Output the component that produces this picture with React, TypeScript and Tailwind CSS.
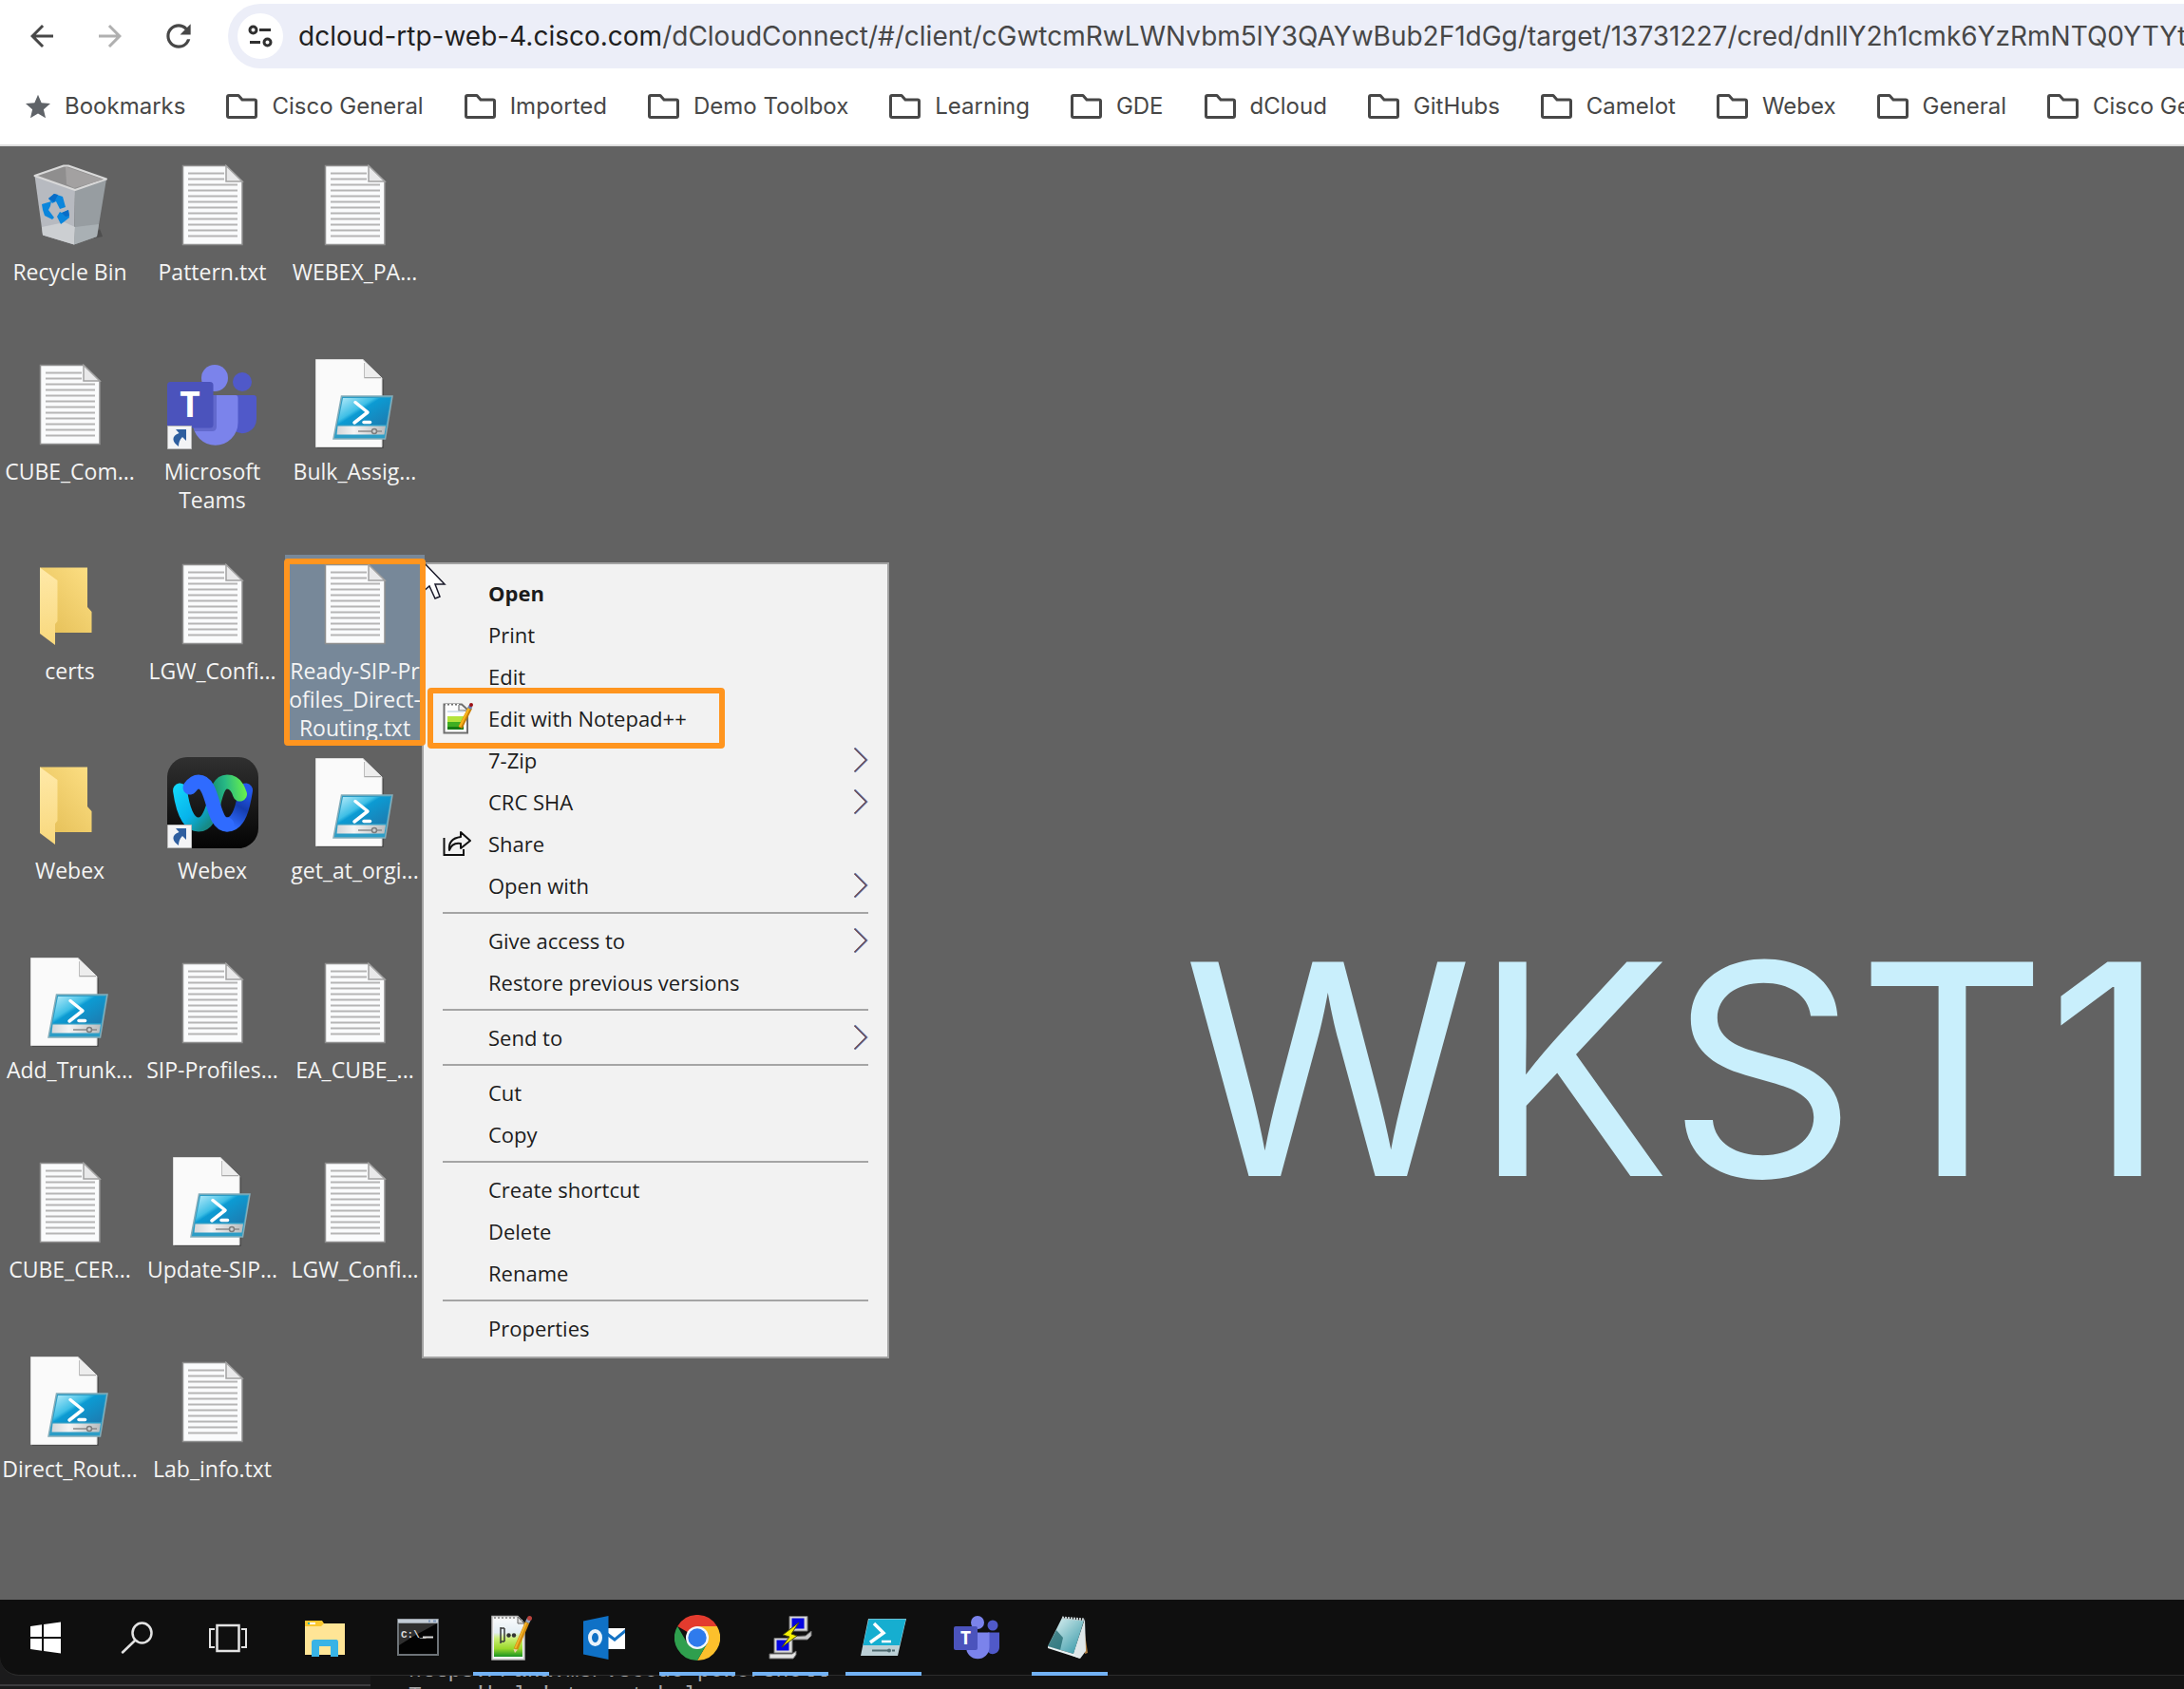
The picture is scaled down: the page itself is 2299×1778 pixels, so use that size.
import React from 'react';
import { MdArrowBack, MdArrowForward, MdRefresh } from 'react-icons/md';

/* ---------- desktop icons (96 x 96) ---------- */

function TextFileIcon() {
  const lines = [15, 21, 27, 33, 39, 45, 51, 57, 63, 69, 75, 81];
  return (
    <svg viewBox="0 0 96 96" className="size-24" aria-hidden="true">
      <path d="M16.500 7.500H62L79 24V90.500H16.500Z" fill="#fafbfc" stroke="#8f8f8f" strokeWidth="1.500" />
      {lines.map((y, i) => (
        <path key={y} d={i < 2 ? `M22 ${y}.500H60` : `M22 ${y}.500H74`} stroke="#b5b5b5" strokeWidth="2.200" />
      ))}
      <path d="M62 7.500V24H79Z" fill="#e9e9ea" stroke="#a3a3a3" strokeWidth="1.500" />
    </svg>
  );
}

function ScriptFileIcon() {
  return (
    <svg viewBox="0 0 96 96" className="size-24" aria-hidden="true">
      <defs>
        <linearGradient id="psFile" x1="0" y1="0" x2="1" y2="0.800">
          <stop offset="0" stopColor="#b9ecfa" />
          <stop offset="0.420" stopColor="#3fbfe6" />
          <stop offset="0.500" stopColor="#0c9bd3" />
          <stop offset="1" stopColor="#1b7fb4" />
        </linearGradient>
        <linearGradient id="psStrip" x1="0" y1="0" x2="1" y2="0">
          <stop offset="0" stopColor="#d4d6d8" />
          <stop offset="0.350" stopColor="#f4f4f4" />
          <stop offset="1" stopColor="#b9bcbe" />
        </linearGradient>
      </defs>
      <path d="M8 3H58L78 23V95H8Z" fill="#3f3f3f" opacity="0.600" />
      <path d="M6.500 1.500H56L76 21V93.500H6.500Z" fill="#fafafa" stroke="#dcdcdc" />
      <path d="M58 5V20.500H75" fill="#f0f0f0" stroke="#a9a9a9" strokeWidth="1.500" />
      <path d="M58 4L75 20H58Z" fill="#ededed" />
      <path d="M33.500 40H87L79.500 85H25Z" fill="#2c9dc6" stroke="#84adba" strokeWidth="1.500" />
      <path d="M35 42H85L80.500 70H29.500Z" fill="url(#psFile)" />
      <path d="M29.500 71.500H80L78.500 80.500H28.500Z" fill="url(#psStrip)" />
      <path d="M51 77H66M70 77H76" stroke="#8b8b8b" strokeWidth="1.500" />
      <circle cx="68" cy="77" r="2.500" fill="none" stroke="#7d7d7d" strokeWidth="1.500" />
      <path d="M48 46.500L61 57L47 68" fill="none" stroke="#fff" strokeWidth="3.500" strokeLinecap="round" strokeLinejoin="round" />
      <path d="M57 67.500H63.500" stroke="#fff" strokeWidth="3.500" strokeLinecap="round" />
    </svg>
  );
}

function RecycleBinIcon() {
  return (
    <svg viewBox="0 0 96 96" className="size-24" aria-hidden="true">
      <path d="M72 84L82 82L79 74Z" fill="#4e4e4e" />
      <path d="M10.500 18L53 33L52 90.500L19 80.500Z" fill="#b7bac0" />
      <path d="M86 21.500L53 33L52 90.500L76 82Z" fill="#979da1" />
      <path d="M18 72L42 67L53 72L52 90.500L19 80.500Z" fill="#cccfd2" />
      <path d="M53 72L78 69L76 82L52 90.500Z" fill="#a9b0b4" />
      <path d="M10.500 18L41 7.500H46L86 21.500L53 33Z" fill="#8f8e8e" stroke="#d9d9d9" strokeWidth="2" strokeLinejoin="round" />
      <path d="M43 8.500L44 27L52 31L83 22Z" fill="#a3a1a1" />
      <g fill="#0b86dc">
        <path d="M25 42L31 37L40 40L43 51L37 53L33 45L29 47Z" />
        <path d="M18 48L28 45L27 50L25 54L31 62L29 64L21 60L19 54Z" />
        <path d="M34 61L37 56L39 57L46 54L47 62L42 66L38 69Z" />
      </g>
      <path d="M25 42L31 37L35 38L31 46Z" fill="#0a6cc6" />
      <path d="M39 57L46 54L47 60L43 61Z" fill="#0a6cc6" />
    </svg>
  );
}

function FolderIcon() {
  return (
    <svg viewBox="0 0 96 96" className="size-24" aria-hidden="true">
      <defs>
        <linearGradient id="folderBack" x1="0" y1="1" x2="1" y2="0">
          <stop offset="0" stopColor="#e3bd54" />
          <stop offset="1" stopColor="#fddf84" />
        </linearGradient>
        <linearGradient id="folderFront" x1="0" y1="0" x2="0" y2="1">
          <stop offset="0" stopColor="#ffe9a8" />
          <stop offset="1" stopColor="#f8d87d" />
        </linearGradient>
      </defs>
      <path d="M16 10.500H66V52L70.500 57V79H32L16 70Z" fill="url(#folderBack)" />
      <path d="M16 10.500L34.500 24V67L32 70V92L16 80Z" fill="url(#folderFront)" />
    </svg>
  );
}

function ShortcutBadge() {
  return (
    <g>
      <path d="M0.500 71.500H25.500V95.500H0.500Z" fill="#f3f4f6" stroke="#b9b9b9" />
      <path d="M9 75H20V87L16 83C13 86 12 89 12 93C5 88 4 82 12.500 79Z" fill="#2f5f9f" />
    </g>
  );
}

function TeamsIcon() {
  return (
    <svg viewBox="0 0 96 96" className="size-24" aria-hidden="true">
      <circle cx="79" cy="25" r="10" fill="#5059c9" />
      <path d="M70 39H91Q94 39 94 42V64A15 15 0 0 1 70 76Z" fill="#5059c9" />
      <circle cx="50" cy="21" r="14" fill="#7b83eb" />
      <path d="M27 39H72Q74.500 39 74.500 42V68A23.500 23.500 0 0 1 27 68Z" fill="#7b83eb" />
      <path d="M30 39H52V72Q52 77 47 77H28.500L27 68Z" fill="#4a50b0" opacity="0.500" />
      <rect x="0" y="25" width="48.500" height="48.500" rx="3.500" fill="#4b53bc" />
      <text x="24" y="62" textAnchor="middle" fontFamily="Open Sans, sans-serif" fontWeight="700" fontSize="37" fill="#fff">T</text>
      <ShortcutBadge />
    </svg>
  );
}

function WebexIcon() {
  return (
    <svg viewBox="0 0 96 96" className="size-24" aria-hidden="true">
      <defs>
        <linearGradient id="wxBg" x1="0" y1="0" x2="0" y2="1">
          <stop offset="0" stopColor="#303030" />
          <stop offset="0.500" stopColor="#1a1a1a" />
          <stop offset="1" stopColor="#040404" />
        </linearGradient>
        <linearGradient id="wxCyan" gradientUnits="userSpaceOnUse" x1="10" y1="30" x2="48" y2="66">
          <stop offset="0" stopColor="#12d6fb" />
          <stop offset="0.600" stopColor="#07b3ea" />
          <stop offset="1" stopColor="#178a86" />
        </linearGradient>
        <linearGradient id="wxGreen" gradientUnits="userSpaceOnUse" x1="46" y1="40" x2="82" y2="36">
          <stop offset="0" stopColor="#148a72" />
          <stop offset="0.450" stopColor="#27b884" />
          <stop offset="1" stopColor="#65ee4f" />
        </linearGradient>
        <linearGradient id="wxBlue" gradientUnits="userSpaceOnUse" x1="64" y1="70" x2="84" y2="36">
          <stop offset="0" stopColor="#2f6bff" />
          <stop offset="0.550" stopColor="#143cae" />
          <stop offset="1" stopColor="#2358ea" />
        </linearGradient>
      </defs>
      <rect width="96" height="96" rx="21" fill="url(#wxBg)" />
      <g fill="none" strokeLinecap="round" strokeWidth="15">
        <path d="M63 71C76 71 80 51 82.500 35" stroke="url(#wxBlue)" />
        <path d="M13.500 35C16 53 21 71 33 71C42 71 46 60 49 50" stroke="url(#wxCyan)" />
        <path d="M49 48C52 36 55 26 63 26C70 26 74 31 76.500 39" stroke="url(#wxGreen)" />
        <path d="M24 32C27 28 29 26 33 26C50 26 46 71 63 71" stroke="#2f6bff" />
      </g>
      <ShortcutBadge />
    </svg>
  );
}

/* ---------- menu icons ---------- */

function NotepadPlusSmall() {
  return (
    <svg viewBox="0 0 32 34" className="h-[34px] w-8" aria-hidden="true">
      <path d="M1.500 2.500H20L26 8V32.500H1.500Z" fill="#fdfdfd" stroke="#6f6f6f" strokeWidth="2" />
      <path d="M3 3.500H18" stroke="#fff" strokeWidth="3" strokeDasharray="2 2" />
      <path d="M17 3V9H25" fill="#eee" stroke="#909090" strokeWidth="1.500" />
      <path d="M5 10H22" stroke="#c5d7e6" strokeWidth="1.500" />
      <path d="M5 15H22V29H5Z" fill="#b4e33c" />
      <path d="M5 21H22V29H5Z" fill="#3fae22" />
      <path d="M5 26H22V29H5Z" fill="#147a12" />
      <path d="M18.500 27L29 6" stroke="#c77d08" strokeWidth="4.500" />
      <path d="M18 26L28 6" stroke="#f7b41c" strokeWidth="2.500" />
      <path d="M28 7L29.500 4" stroke="#6d7fae" strokeWidth="4" />
      <circle cx="30" cy="3" r="2" fill="#9c0e12" />
    </svg>
  );
}

function ShareIcon() {
  return (
    <svg viewBox="0 0 32 28" className="h-7 w-8" fill="none" stroke="#101010" strokeWidth="2" aria-hidden="true">
      <path d="M1.500 8V26H22V20" />
      <path d="M19 2L29 11L19 19V14C13 13 9 15 7 21C6 12 11 8 19 7Z" strokeLinejoin="round" />
    </svg>
  );
}

function Chevron() {
  return (
    <svg viewBox="0 0 16 28" className="h-7 w-4" fill="none" aria-hidden="true">
      <path d="M2 1.500L14.500 14L2 26.500" stroke="#7fb2ea" strokeWidth="2" />
      <path d="M1 2L13 14L1 26" stroke="#d9a066" strokeWidth="1" />
      <path d="M1.500 1.500L14 14L1.500 26.500" stroke="#5f4a68" strokeWidth="1.500" />
    </svg>
  );
}

/* ---------- taskbar icons ---------- */

const S = ({ children }: { children: React.ReactNode }) => (
  <svg viewBox="0 0 48 48" className="size-12" aria-hidden="true">{children}</svg>
);

const WindowsLogo = () => (
  <S>
    <path d="M8 12L20 10.300V23H8ZM22 10L40 7.500V23H22ZM8 25H20V37.700L8 36ZM22 25H40V40.500L22 38Z" fill="#fff" />
  </S>
);

const SearchGlyph = () => (
  <S>
    <g fill="none" stroke="#e3e3e3" strokeWidth="2.500" strokeLinecap="round">
      <ellipse cx="29.500" cy="19" rx="10" ry="10.500" />
      <path d="M22 27L9 39.500" />
    </g>
  </S>
);

const TaskViewGlyph = () => (
  <S>
    <g fill="none" stroke="#e3e3e3" strokeWidth="2.500">
      <rect x="12.500" y="11" width="23" height="27" />
      <path d="M10 15H5V34H10M38 15H43V34H38" strokeWidth="2" />
    </g>
  </S>
);

const ExplorerGlyph = () => (
  <S>
    <path d="M3 6H21L23 9H41Q45 9 45 12V40Q45 42 43 42H5Q3 42 3 40Z" fill="#fbc72e" />
    <path d="M6 9H14" stroke="#fff" strokeWidth="2" />
    <path d="M6 9H8" stroke="#35b5a0" strokeWidth="2" />
    <path d="M3 12H20L23 9H45V42H3Z" fill="#ffe596" />
    <path d="M10 44V29Q10 26 13 26H36Q38 26 38 29V44H30V33H18V44Z" fill="#38b3e6" />
  </S>
);

const TerminalGlyph = () => (
  <S>
    <rect x="2" y="4" width="44" height="39" fill="#6d7378" />
    <rect x="3" y="4.500" width="42" height="4" fill="#c3ccd6" />
    <path d="M35 6.500H37M40 6.500H43" stroke="#7a94b8" strokeWidth="2" />
    <rect x="4" y="9" width="40" height="32" fill="#030303" />
    <path d="M4 9H44L20 22L4 32Z" fill="#3b3b3b" opacity="0.800" />
    <text x="6" y="24" fontFamily="Liberation Mono, monospace" fontWeight="700" fontSize="11" fill="#dcdcdc">C:\_</text>
    <path d="M29 23.500H40" stroke="#d9d9d9" strokeWidth="2" />
  </S>
);

const NotepadPlusGlyph = () => (
  <S>
    <defs>
      <linearGradient id="nppPage" x1="0" y1="0" x2="0" y2="1">
        <stop offset="0" stopColor="#f6f9fb" />
        <stop offset="0.350" stopColor="#e4eef4" />
        <stop offset="0.500" stopColor="#cdf07a" />
        <stop offset="0.780" stopColor="#9bd92c" />
        <stop offset="1" stopColor="#189321" />
      </linearGradient>
    </defs>
    <path d="M4 1.500H31L38 9V47H4Z" fill="#f5f5f5" stroke="#b9b9b9" strokeWidth="1.500" />
    <path d="M6 5H36V44H6Z" fill="url(#nppPage)" />
    <path d="M6 3H28" stroke="#9a9a9a" strokeWidth="2" strokeDasharray="2 2" />
    <path d="M31 2V9H38Z" fill="#ddd" stroke="#666" />
    <path d="M13 13V30M17 14V28M13 14H17M13 28H17" stroke="#3a3a3a" strokeWidth="1.500" />
    <circle cx="21.500" cy="21.500" r="2.200" fill="#333" />
    <circle cx="27" cy="21.500" r="2.200" fill="#333" />
    <path d="M29 36L41 8" stroke="#d48d0e" strokeWidth="4.500" />
    <path d="M28.500 35L40 8" stroke="#f3b52f" strokeWidth="1.800" />
    <path d="M41 8L43 4" stroke="#9aa5bb" strokeWidth="4.500" />
    <circle cx="43.500" cy="3.500" r="2.500" fill="#b9423d" />
    <path d="M26.500 36L28 40L31 36.500Z" fill="#e9cfa3" />
  </S>
);

const OutlookGlyph = () => (
  <S>
    <rect x="26" y="14" width="20" height="22" fill="#fff" />
    <path d="M46 15V19L35 28L27 22V18L35 24Z" fill="#1573c4" />
    <path d="M2 6.500L28.500 1V47L2 41.500Z" fill="#0f71c6" />
    <ellipse cx="14.500" cy="24" rx="5.500" ry="7" fill="none" stroke="#e9f3fb" strokeWidth="4" />
  </S>
);

const ChromeGlyph = () => (
  <S>
    <path d="M24 24L3.200 12A24 24 0 0 1 44.800 12Z" fill="#e33b2e" />
    <path d="M24 12H44.800A24 24 0 0 1 24 48L34.400 30Z" fill="#fcc02c" />
    <path d="M13.600 30L3.200 12A24 24 0 0 0 24 48L34.400 30Z" fill="#2f9f4e" />
    <circle cx="24" cy="24" r="12" fill="#f3f7fd" />
    <circle cx="24" cy="24" r="9.700" fill="#2f7bed" />
  </S>
);

const PuttyGlyph = () => (
  <S>
    <g>
      <path d="M23 1.500H42V17H23Z" fill="#d9d9d9" stroke="#777" />
      <rect x="25.500" y="3.500" width="13" height="11" fill="#0505e0" />
      <path d="M22 23L40 22L46 17V22L42 26H22Z" fill="#c9c9c9" stroke="#6e6e6e" />
      <path d="M7 24.500H26V40H7Z" fill="#d9d9d9" stroke="#777" />
      <rect x="9.500" y="26.500" width="13" height="11" fill="#0505e0" />
      <path d="M2 41H26L30 38V42L27 46H2Z" fill="#e4e4e4" stroke="#6e6e6e" />
    </g>
    <path d="M33 8L16 21L23 23L15 34L31 22L25 20Z" fill="#f6f203" stroke="#4b4a0a" strokeWidth="1" />
  </S>
);

const PowerShellGlyph = () => (
  <S>
    <path d="M8 4H48L39 43H0Z" fill="#bcd0d6" />
    <path d="M8.500 4.500H47.500L41 32H2.500Z" fill="#16aed0" />
    <path d="M14 9L24 19L10 29" fill="none" stroke="#fff" strokeWidth="3.500" />
    <path d="M22 28H32" stroke="#fff" strokeWidth="2.500" />
    <path d="M12 37.500H30M33 37.500H36" stroke="#4e6a70" strokeWidth="2" />
    <circle cx="30" cy="37.500" r="2" fill="#4e6a70" />
  </S>
);

const TeamsGlyph = () => (
  <S>
    <circle cx="41" cy="11" r="5.500" fill="#5059c9" />
    <path d="M36 18.500H48V34A7 7 0 0 1 36 39Z" fill="#5059c9" />
    <circle cx="25" cy="8" r="7" fill="#7b83eb" />
    <path d="M13 18.500H37.500V34A12 12 0 0 1 13 34Z" fill="#7b83eb" />
    <rect x="0" y="12" width="25" height="25" rx="2" fill="#4b53bc" />
    <text x="12.500" y="31" textAnchor="middle" fontFamily="Open Sans, sans-serif" fontWeight="700" fontSize="19" fill="#fff">T</text>
  </S>
);

const NotepadGlyph = () => (
  <S>
    <defs>
      <linearGradient id="npPad" x1="0" y1="0" x2="1" y2="1">
        <stop offset="0" stopColor="#eefafa" />
        <stop offset="0.500" stopColor="#8cc6cd" />
        <stop offset="1" stopColor="#2d93a5" />
      </linearGradient>
    </defs>
    <path d="M38 6L43 40L40 41Z" fill="#a9793c" />
    <path d="M40 4L41 38L35 46L27 43Z" fill="#dfe7e9" />
    <path d="M16 3L39 6L28 41L1 33Z" fill="url(#npPad)" />
    <path d="M1 33L10 16L17 24L14 37Z" fill="#175f66" opacity="0.700" />
    <path d="M16 3L40 5" stroke="#c3cdd0" strokeWidth="3" strokeDasharray="2 1" />
    <path d="M1 33L28 41L35 46L29 44L1 35Z" fill="#eaf2f3" />
  </S>
);

/* ---------- data ---------- */

const bookmarks = [
  'Cisco General', 'Imported', 'Demo Toolbox', 'Learning', 'GDE', 'dCloud',
  'GitHubs', 'Camelot', 'Webex', 'General', 'Cisco General',
];

type Kind = 'bin' | 'txt' | 'ps' | 'folder' | 'teams' | 'webex';

const icons: Record<Kind, () => React.ReactElement> = {
  bin: RecycleBinIcon, txt: TextFileIcon, ps: ScriptFileIcon,
  folder: FolderIcon, teams: TeamsIcon, webex: WebexIcon,
};

const shortcuts: { kind: Kind; lines: string[]; selected?: boolean }[] = [
  { kind: 'bin', lines: ['Recycle Bin'] },
  { kind: 'txt', lines: ['CUBE_Com...'] },
  { kind: 'folder', lines: ['certs'] },
  { kind: 'folder', lines: ['Webex'] },
  { kind: 'ps', lines: ['Add_Trunk...'] },
  { kind: 'txt', lines: ['CUBE_CER...'] },
  { kind: 'ps', lines: ['Direct_Rout...'] },
  { kind: 'txt', lines: ['Pattern.txt'] },
  { kind: 'teams', lines: ['Microsoft', 'Teams'] },
  { kind: 'txt', lines: ['LGW_Confi...'] },
  { kind: 'webex', lines: ['Webex'] },
  { kind: 'txt', lines: ['SIP-Profiles...'] },
  { kind: 'ps', lines: ['Update-SIP...'] },
  { kind: 'txt', lines: ['Lab_info.txt'] },
  { kind: 'txt', lines: ['WEBEX_PA...'] },
  { kind: 'ps', lines: ['Bulk_Assig...'] },
  { kind: 'txt', lines: ['Ready-SIP-Pr', 'ofiles_Direct-', 'Routing.txt'], selected: true },
  { kind: 'ps', lines: ['get_at_orgi...'] },
  { kind: 'txt', lines: ['EA_CUBE_...'] },
  { kind: 'txt', lines: ['LGW_Confi...'] },
];

type Item = { label: string; icon?: React.ReactNode; sub?: boolean; bold?: boolean; marked?: boolean };

const menu: Item[][] = [
  [
    { label: 'Open', bold: true },
    { label: 'Print' },
    { label: 'Edit' },
    { label: 'Edit with Notepad++', icon: <NotepadPlusSmall />, marked: true },
    { label: '7-Zip', sub: true },
    { label: 'CRC SHA', sub: true },
    { label: 'Share', icon: <ShareIcon /> },
    { label: 'Open with', sub: true },
  ],
  [{ label: 'Give access to', sub: true }, { label: 'Restore previous versions' }],
  [{ label: 'Send to', sub: true }],
  [{ label: 'Cut' }, { label: 'Copy' }],
  [{ label: 'Create shortcut' }, { label: 'Delete' }, { label: 'Rename' }],
  [{ label: 'Properties' }],
];

const apps = [
  { name: 'File Explorer', Glyph: ExplorerGlyph, open: false },
  { name: 'Command Prompt', Glyph: TerminalGlyph, open: false },
  { name: 'Notepad++', Glyph: NotepadPlusGlyph, open: true },
  { name: 'Outlook', Glyph: OutlookGlyph, open: false },
  { name: 'Chrome', Glyph: ChromeGlyph, open: true },
  { name: 'PuTTY', Glyph: PuttyGlyph, open: true },
  { name: 'PowerShell', Glyph: PowerShellGlyph, open: true },
  { name: 'Teams', Glyph: TeamsGlyph, open: false },
  { name: 'Notepad', Glyph: NotepadGlyph, open: true },
];

/* ---------- sections ---------- */

function BrowserBar() {
  return (
    <header className="shrink-0 border-b-2 border-[#dedede] bg-white pb-1 font-['Inter',sans-serif]">
      <div className="flex items-center gap-6 pt-1 pb-1 pl-5">
        <button aria-label="Back" className="grid size-12 shrink-0 place-items-center text-[#474747]"><MdArrowBack size={36} /></button>
        <button aria-label="Forward" className="grid size-12 shrink-0 place-items-center text-[#b0b0b0]"><MdArrowForward size={36} /></button>
        <button aria-label="Reload" className="grid size-12 shrink-0 place-items-center text-[#474747]"><MdRefresh size={38} /></button>
        <div className="ml-1 flex h-[68px] min-w-0 flex-1 items-center rounded-l-full bg-[#eceef8] pl-2.5 text-[28px] leading-9">
          <button aria-label="Site information" className="mr-4 grid size-12 shrink-0 place-items-center rounded-full bg-white">
            <svg viewBox="0 0 26 26" className="size-[26px]" fill="none" stroke="#303030" strokeWidth="3" aria-hidden="true">
              <circle cx="5.500" cy="6.500" r="3.500" />
              <path d="M12 6.500H24M2 19.500H13" />
              <circle cx="20.500" cy="19.500" r="3.500" />
            </svg>
          </button>
          <label htmlFor="path" className="text-[#1f1f1f]">dcloud-rtp-web-4.cisco.com</label>
          <input
            id="path"
            type="text"
            defaultValue="/dCloudConnect/#/client/cGwtcmRwLWNvbm5lY3QAYwBub2F1dGg/target/13731227/cred/dnllY2h1cmk6YzRmNTQ0YTYtM2"
            className="min-w-0 flex-1 bg-transparent text-[#474747] outline-none"
          />
        </div>
      </div>
      <nav className="flex h-[72px] items-center gap-[43px] overflow-hidden pl-[27px] text-2xl leading-8 whitespace-nowrap text-[#474747]">
        <a href="#bookmarks" className="flex shrink-0 items-center gap-[15px]">
          <svg viewBox="2 2 20 19" className="h-[26px] w-[26px]" fill="#5f6368" aria-hidden="true">
            <path d="M12 17.270L18.180 21l-1.640-7.030L22 9.240l-7.190-.610L12 2 9.190 8.630 2 9.240l5.460 4.730L5.820 21z" />
          </svg>
          Bookmarks
        </a>
        {bookmarks.map((b, i) => (
          <a key={i} href="#folder" className="flex shrink-0 items-center gap-[15px]">
            <svg viewBox="0 0 33 26" className="h-[26px] w-[33px]" fill="none" stroke="#474747" strokeWidth="3" strokeLinejoin="round" aria-hidden="true">
              <path d="M1.500 3Q1.500 1.500 3 1.500H13L17 6H30Q31.500 6 31.500 7.500V23Q31.500 24.500 30 24.500H3Q1.500 24.500 1.500 23Z" />
            </svg>
            {b}
          </a>
        ))}
      </nav>
    </header>
  );
}

function DesktopIcons() {
  return (
    <div className="grid w-[450px] auto-cols-[150px] grid-flow-col grid-rows-[repeat(7,210px)] pt-2.5">
      {shortcuts.map((s, i) => {
        const Icon = icons[s.kind];
        return (
          <div key={i} className="w-[147px]">
            <button
              className={
                s.selected
                  ? 'relative flex w-full flex-col items-center bg-[#778899] pt-[3px]'
                  : 'flex w-full flex-col items-center pt-[3px]'
              }
            >
              <Icon />
              <span className="mt-2 block text-[23px] leading-[30px] whitespace-nowrap text-[#f4f4f4]">
                {s.lines.map((l) => (
                  <span key={l} className="block">{l}</span>
                ))}
              </span>
              {s.selected && <span className="absolute -inset-x-px top-1 -bottom-1 z-20 rounded border-6 border-[#ff951f]" />}
            </button>
          </div>
        );
      })}
    </div>
  );
}

function ContextMenu() {
  return (
    <div role="menu" className="absolute top-[438px] left-[444px] w-[492px] border-2 border-[#a3a3a3] bg-[#f2f2f2] py-2 text-[22px] leading-[30px] text-[#1c1c1c]">
      {menu.map((group, g) => (
        <div key={g}>
          {g > 0 && (
            <div className="flex h-3.5 items-center px-5">
              <hr className="w-full border-t-2 border-[#a5a5a5]" />
            </div>
          )}
          {group.map((it) => (
            <button key={it.label} role="menuitem" className="relative flex h-11 w-full items-center gap-4 px-5 text-left">
              <span className="w-8 shrink-0">{it.icon}</span>
              <span className={it.bold ? 'flex-1 font-bold' : 'flex-1'}>{it.label}</span>
              {it.sub && <Chevron />}
              {it.marked && <span className="absolute -inset-y-2.5 left-1 w-[313px] rounded border-6 border-[#ff951f]" />}
            </button>
          ))}
        </div>
      ))}
    </div>
  );
}

function Taskbar() {
  return (
    <footer className="flex h-20 shrink-0 rounded-bl-[20px] border-b border-[#2c2c2c] bg-[#0f0f0f]">
      <button aria-label="Start" className="grid w-24 place-items-center"><WindowsLogo /></button>
      <button aria-label="Search" className="grid w-24 place-items-center"><SearchGlyph /></button>
      <button aria-label="Task View" className="grid w-24 place-items-center"><TaskViewGlyph /></button>
      <div className="ml-[5px] flex">
        {apps.map(({ name, Glyph, open }) => (
          <button key={name} aria-label={name} className="relative grid w-[98px] place-items-center">
            <Glyph />
            {open && <span className="absolute inset-x-[9px] -bottom-px h-1 bg-[#72b2f5]" />}
          </button>
        ))}
      </div>
    </footer>
  );
}

export default function App() {
  return (
    <div className="flex h-screen flex-col overflow-hidden bg-[#1b1b1c]">
      <BrowserBar />
      <main className="relative flex-1 bg-[#626262] font-['Open_Sans','Noto_Sans',sans-serif]">
        <div className="absolute top-[812px] right-[18px] font-['Inter',sans-serif] text-[310px] leading-[320px] text-[#c9effc] select-none">
          WKST1
        </div>
        <DesktopIcons />
        <ContextMenu />
        <svg viewBox="0 0 26 42" className="absolute top-[436px] left-[444px] z-10 h-[42px] w-[26px]" aria-hidden="true">
          <path d="M1 1V33L8 27L14 40L19 38L14 25L24 25Z" fill="#fff" stroke="#1b1b2b" strokeWidth="1.500" />
        </svg>
      </main>
      <Taskbar />
      <div className="flex h-3.5 shrink-0 overflow-hidden">
        <div className="w-[390px] shrink-0 pt-[9px]">
          <div className="h-0.5 bg-[#3c3c3e]" />
        </div>
        <pre className="-mt-[18px] flex-1 bg-[#141414] pl-10 font-['Liberation_Mono',monospace] text-[23px] leading-[27px] text-[#a5a5a5]">{"https://aka.ms/vscode-powershell\nType 'help' to get help."}</pre>
      </div>
    </div>
  );
}
